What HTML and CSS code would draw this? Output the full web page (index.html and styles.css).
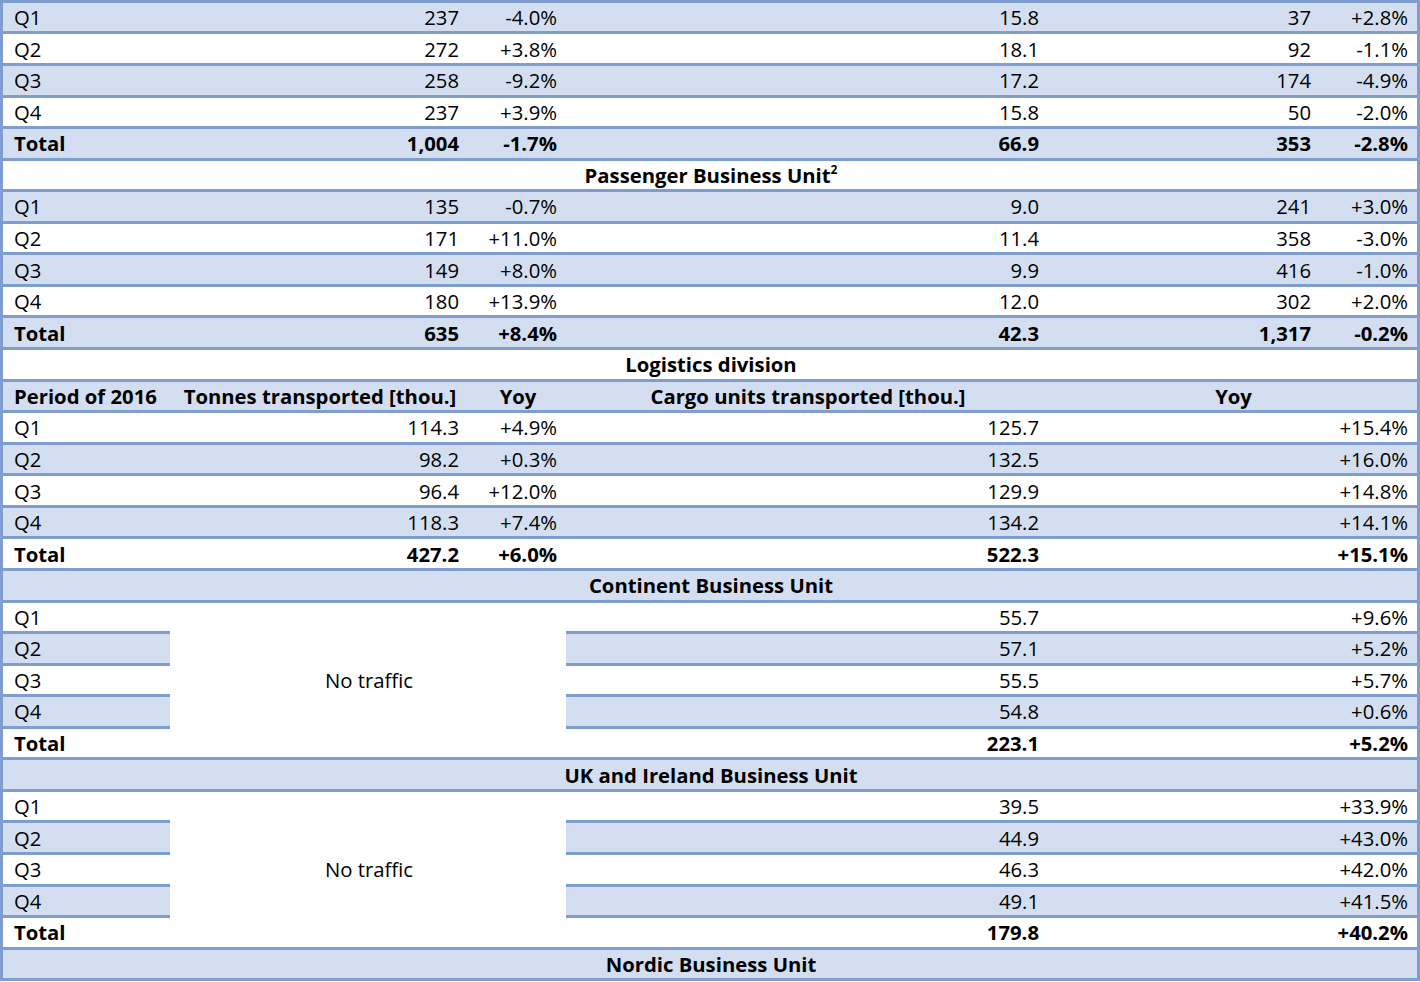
FILE: index.html
```html
<!DOCTYPE html>
<html lang="en">
<head>
<meta charset="utf-8">
<title>Traffic 2016</title>
<link rel="stylesheet" href="styles.css">
</head>
<body>
<table class="traffic">
  <colgroup>
    <col class="c-period"><col class="c-tonnes"><col class="c-yoy"><col class="c-units"><col class="c-val"><col class="c-yoy2">
  </colgroup>
  <tbody>
    <tr class="band"><td>Q1</td><td class="num">237</td><td class="num">-4.0%</td><td class="num">15.8</td><td class="num">37</td><td class="num">+2.8%</td></tr>
    <tr><td>Q2</td><td class="num">272</td><td class="num">+3.8%</td><td class="num">18.1</td><td class="num">92</td><td class="num">-1.1%</td></tr>
    <tr class="band"><td>Q3</td><td class="num">258</td><td class="num">-9.2%</td><td class="num">17.2</td><td class="num">174</td><td class="num">-4.9%</td></tr>
    <tr><td>Q4</td><td class="num">237</td><td class="num">+3.9%</td><td class="num">15.8</td><td class="num">50</td><td class="num">-2.0%</td></tr>
    <tr class="band total"><td>Total</td><td class="num">1,004</td><td class="num">-1.7%</td><td class="num">66.9</td><td class="num">353</td><td class="num">-2.8%</td></tr>
    <tr class="section"><td colspan="6">Passenger Business Unit<sup>2</sup></td></tr>
    <tr class="band"><td>Q1</td><td class="num">135</td><td class="num">-0.7%</td><td class="num">9.0</td><td class="num">241</td><td class="num">+3.0%</td></tr>
    <tr><td>Q2</td><td class="num">171</td><td class="num">+11.0%</td><td class="num">11.4</td><td class="num">358</td><td class="num">-3.0%</td></tr>
    <tr class="band"><td>Q3</td><td class="num">149</td><td class="num">+8.0%</td><td class="num">9.9</td><td class="num">416</td><td class="num">-1.0%</td></tr>
    <tr><td>Q4</td><td class="num">180</td><td class="num">+13.9%</td><td class="num">12.0</td><td class="num">302</td><td class="num">+2.0%</td></tr>
    <tr class="band total"><td>Total</td><td class="num">635</td><td class="num">+8.4%</td><td class="num">42.3</td><td class="num">1,317</td><td class="num">-0.2%</td></tr>
    <tr class="section"><td colspan="6">Logistics division</td></tr>
    <tr class="band head"><td>Period of 2016</td><td class="ctr">Tonnes transported [thou.]</td><td class="ctr">Yoy</td><td class="ctr">Cargo units transported [thou.]</td><td class="ctr" colspan="2">Yoy</td></tr>
    <tr><td>Q1</td><td class="num">114.3</td><td class="num">+4.9%</td><td class="num">125.7</td><td class="num" colspan="2">+15.4%</td></tr>
    <tr class="band"><td>Q2</td><td class="num">98.2</td><td class="num">+0.3%</td><td class="num">132.5</td><td class="num" colspan="2">+16.0%</td></tr>
    <tr><td>Q3</td><td class="num">96.4</td><td class="num">+12.0%</td><td class="num">129.9</td><td class="num" colspan="2">+14.8%</td></tr>
    <tr class="band"><td>Q4</td><td class="num">118.3</td><td class="num">+7.4%</td><td class="num">134.2</td><td class="num" colspan="2">+14.1%</td></tr>
    <tr class="total"><td>Total</td><td class="num">427.2</td><td class="num">+6.0%</td><td class="num">522.3</td><td class="num" colspan="2">+15.1%</td></tr>
    <tr class="band section"><td colspan="6">Continent Business Unit</td></tr>
    <tr><td>Q1</td><td class="none" rowspan="5" colspan="2">No traffic</td><td class="num">55.7</td><td class="num" colspan="2">+9.6%</td></tr>
    <tr class="band"><td>Q2</td><td class="num">57.1</td><td class="num" colspan="2">+5.2%</td></tr>
    <tr><td>Q3</td><td class="num">55.5</td><td class="num" colspan="2">+5.7%</td></tr>
    <tr class="band"><td>Q4</td><td class="num">54.8</td><td class="num" colspan="2">+0.6%</td></tr>
    <tr class="total"><td>Total</td><td class="num">223.1</td><td class="num" colspan="2">+5.2%</td></tr>
    <tr class="band section"><td colspan="6">UK and Ireland Business Unit</td></tr>
    <tr><td>Q1</td><td class="none" rowspan="5" colspan="2">No traffic</td><td class="num">39.5</td><td class="num" colspan="2">+33.9%</td></tr>
    <tr class="band"><td>Q2</td><td class="num">44.9</td><td class="num" colspan="2">+43.0%</td></tr>
    <tr><td>Q3</td><td class="num">46.3</td><td class="num" colspan="2">+42.0%</td></tr>
    <tr class="band"><td>Q4</td><td class="num">49.1</td><td class="num" colspan="2">+41.5%</td></tr>
    <tr class="total"><td>Total</td><td class="num">179.8</td><td class="num" colspan="2">+40.2%</td></tr>
    <tr class="band section"><td colspan="6">Nordic Business Unit</td></tr>
  </tbody>
</table>
</body>
</html>
```
FILE: styles.css
```css
html, body {
  margin: 0;
  padding: 0;
  background: #ffffff;
}

.traffic {
  width: 1420px;
  table-layout: fixed;
  border-collapse: separate;
  border-spacing: 0 3px;
  border-style: solid;
  border-color: #7f9dcf;
  border-width: 0 3px;
  background: #7f9dcf;
  margin-top: -0.2px;
  font-family: "Open Sans", "Noto Sans", sans-serif;
  font-size: 20.3px;
  color: #000;
}

.c-period { width: 167px; }
.c-tonnes { width: 298px; }
.c-yoy { width: 98px; }
.c-units { width: 482px; }
.c-val { width: 272px; }
.c-yoy2 { width: 97px; }

.traffic td {
  height: 28.57px;
  padding: 0 9px 0 11px;
  background: #ffffff;
  white-space: nowrap;
  vertical-align: middle;
  line-height: 24px;
  overflow: hidden;
}

.traffic tr.band td {
  background: #d3dff0;
}

.traffic td.none {
  background: #ffffff;
  text-align: center;
}

.traffic tr.band td.none {
  background: #ffffff;
}

.num { text-align: right; }
.ctr { text-align: center; }

.total td,
.head td,
.section td {
  font-weight: 700;
}

.section td {
  text-align: center;
}

.section sup {
  font-size: 12px;
  line-height: 0;
  vertical-align: 9px;
}
```
